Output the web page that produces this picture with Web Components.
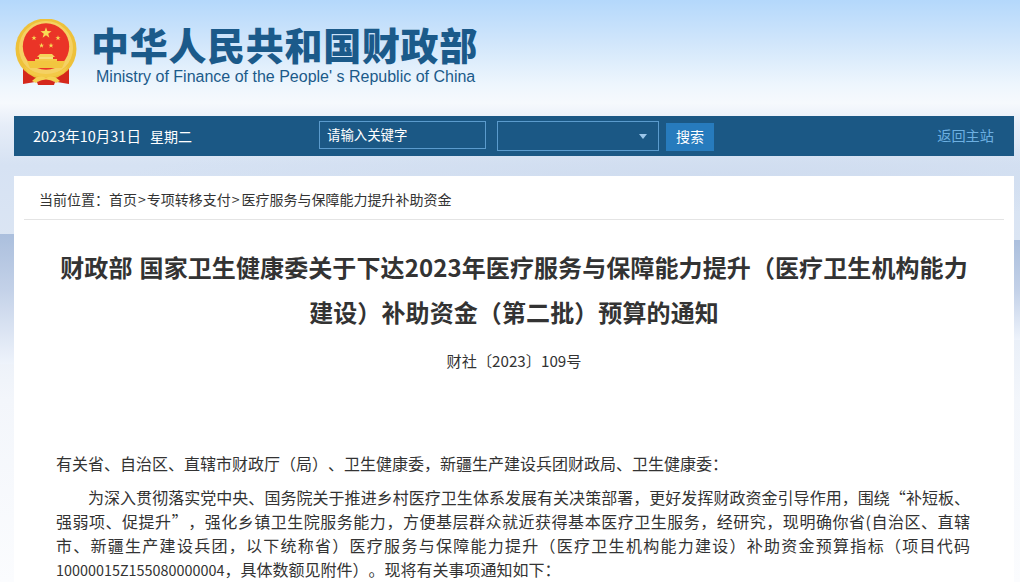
<!DOCTYPE html>
<html lang="zh-CN">
<head>
<meta charset="UTF-8">
<title>财政部</title>
<style>
html, body { margin: 0; height: 582px; overflow: hidden; }
body {
    font-family: "Liberation Sans", "Noto Sans CJK SC", sans-serif;
    background:
        linear-gradient(180deg, #abbfdd 0, #c3d1e8 55px, #eef3fb 130px) 0 234px / 14px 130px no-repeat,
        linear-gradient(180deg, #abbfdd 0, #c3d1e8 50px, #eef3fb 100px) 1014px 240px / 6px 100px no-repeat,
        radial-gradient(ellipse 600px 40px at 720px 178px, #cfdcef 0%, rgba(207,220,239,0) 100%),
        linear-gradient(180deg, #b4d8fb 0%, #cfe5fb 40px, #eef6fd 85px, #f6f9fd 103px, #e6edf8 125px, #d6e2f3 165px, #dbe5f3 240px, #f3f6fb 400px, #fbfcfe 582px);
}
</style>
</head>
<body>
<mof-header></mof-header>
<mof-toolbar date="2023年10月31日" weekday="星期二"></mof-toolbar>
<mof-article>
    <mof-crumbs slot="crumbs"></mof-crumbs>
    <h1 slot="title">财政部 国家卫生健康委关于下达2023年医疗服务与保障能力提升（医疗卫生机构能力建设）补助资金（第二批）预算的通知</h1>
    <div slot="docno">财社〔2023〕109号</div>
    <p>有关省、自治区、直辖市财政厅（局）、卫生健康委，新疆生产建设兵团财政局、卫生健康委：</p>
    <p class="indent">为深入贯彻落实党中央、国务院关于推进乡村医疗卫生体系发展有关决策部署，更好发挥财政资金引导作用，围绕“补短板、强弱项、促提升”，强化乡镇卫生院服务能力，方便基层群众就近获得基本医疗卫生服务，经研究，现明确你省(自治区、直辖市、新疆生产建设兵团，以下统称省）医疗服务与保障能力提升（医疗卫生机构能力建设）补助资金预算指标（项目代码<span style="font-size:14.4px">10000015Z155080000004</span>，具体数额见附件）。现将有关事项通知如下：</p>
</mof-article>

<script>
    // Site header: emblem plus ministry name
    class MofHeader extends HTMLElement {
        constructor() {
            super();
            this.attachShadow({ mode: 'open' });
            const star = (cx, cy, r) => {
                let pts = [];
                for (let i = 0; i < 10; i++) {
                    const a = -Math.PI / 2 + i * Math.PI / 5;
                    const rr = i % 2 ? r * 0.4 : r;
                    pts.push((cx + rr * Math.cos(a)).toFixed(2) + ',' + (cy + rr * Math.sin(a)).toFixed(2));
                }
                return `<polygon points="${pts.join(' ')}" fill="#f8dc55"/>`;
            };
            this.shadowRoot.innerHTML = `
                <style>
                    :host { display: flex; height: 116px; box-sizing: border-box; padding: 19px 0 0 15px; }
                    svg { width: 62px; height: 66px; flex: none; }
                    .names { margin-left: 14px; padding-top: 5px; color: #1b5a8a; }
                    .cn { font: 900 38px/40px "Noto Sans CJK SC", sans-serif; letter-spacing: 0.7px; white-space: nowrap; }
                    .en { font: 16px/20px "Liberation Sans", sans-serif; margin: 3px 0 0 5px; white-space: nowrap; }
                </style>
                <svg viewBox="0 0 62 66">
                    <!-- red ribbons behind the ring -->
                    <path d="M8 46 L8 65 L20 63 L22 58 L40 58 L42 63 L54 65 L54 46 Z" fill="#d5281c"/>
                    <circle cx="31" cy="30" r="30.5" fill="#eec13a"/>
                    <circle cx="31" cy="29" r="27" fill="#f5d163"/>
                    <circle cx="31" cy="27.5" r="23.2" fill="#ea3427"/>
                    ${star(31, 14, 5.8)}
                    ${star(19, 19, 2.7)}
                    ${star(43, 19, 2.7)}
                    ${star(26.5, 26.5, 2.7)}
                    ${star(36, 26.5, 2.7)}
                    <!-- Tiananmen -->
                    <path d="M25 35 L37 35 L40 38 L22 38 Z" fill="#f6d25a"/>
                    <rect x="24" y="38" width="14" height="2" fill="#f7de7c"/>
                    <rect x="20" y="40" width="22" height="2" fill="#f3c948"/>
                    <path d="M12 42 H50 L47 49 H15 Z" fill="#f2c63f"/>
                    <!-- gold wreath at the foot -->
                    <path d="M9 47 Q31 63 53 47 L49 54 Q31 62 13 54 Z" fill="#f3c947"/>
                    <path d="M17 62 Q24 55 31 59 Q38 55 45 62 L41 64 Q36 60 31 63 Q26 60 21 64 Z" fill="#f5d255"/>
                    <path d="M22 63 Q31 58 40 63 L39 66 H23 Z" fill="#d5281c"/>
                </svg>
                <div class="names">
                    <div class="cn">中华人民共和国财政部</div>
                    <div class="en">Ministry of Finance of the People' s Republic of China</div>
                </div>
            `;
        }
    }
    customElements.define('mof-header', MofHeader);

    // Blue bar with date, search controls and back link
    class MofToolbar extends HTMLElement {
        constructor() {
            super();
            this.attachShadow({ mode: 'open' });
            this.shadowRoot.innerHTML = `
                <style>
                    :host {
                        display: flex; align-items: center; height: 40px; margin: 0 6px 0 14px;
                        background: #1b5885; color: #fff; font: 13.5px "Noto Sans CJK SC", sans-serif;
                    }
                    .date { width: 305px; padding: 0 0 2px 19px; box-sizing: border-box; white-space: nowrap; font-size: 14.5px; }
                    .date b { font-weight: 400; font-size: 14px; margin-left: 9px; }
                    .box { box-sizing: border-box; border: 1px solid #5b9bcd; display: flex; align-items: center; }
                    .kw { width: 167px; height: 28px; margin-bottom: 2px; padding: 0 0 2px 7px; font-size: 13.4px; }
                    .sel { width: 162px; height: 30px; margin-left: 11px; justify-content: flex-end; padding-right: 11px; }
                    .caret { width: 0; height: 0; border: 4px solid transparent; border-top: 5px solid #9cc6ea; margin-top: 4px; }
                    button {
                        width: 48px; height: 28px; margin: 2px 0 0 7px; border: 0; padding: 0 0 2px;
                        background: #277bbd; color: #fff; font: 14px "Noto Sans CJK SC", sans-serif;
                    }
                    a { margin: 0 20px 2px auto; color: #6db0e2; font-size: 14.2px; text-decoration: none; }
                </style>
                <span class="date">${this.getAttribute('date')}<b>${this.getAttribute('weekday')}</b></span>
                <div class="box kw">请输入关键字</div>
                <div class="box sel"><span class="caret"></span></div>
                <button>搜索</button>
                <a href="#">返回主站</a>
            `;
        }
    }
    customElements.define('mof-toolbar', MofToolbar);

    class MofCrumbs extends HTMLElement {
        constructor() {
            super();
            this.attachShadow({ mode: 'open' });
            this.shadowRoot.innerHTML = `
                <style>
                    :host {
                        display: block; margin: 0 10px; height: 44px; box-sizing: border-box; padding: 13px 0 0 15px;
                        border-bottom: 1px solid #e4e4e4; color: #333; font: 14px/20px "Noto Sans CJK SC", sans-serif;
                        white-space: nowrap; text-spacing-trim: space-all;
                    }
                    i { font-style: normal; padding: 0 1px; }
                    i + span { margin-left: 1px; }
                </style>
                当前位置：首页<i>&gt;</i>专项转移支付<i>&gt;</i><span>医疗服务与保障能力提升补助资金</span>
            `;
        }
    }
    customElements.define('mof-crumbs', MofCrumbs);

    // White article panel, body text goes in the default slot
    class MofArticle extends HTMLElement {
        constructor() {
            super();
            this.attachShadow({ mode: 'open' });
            this.shadowRoot.innerHTML = `
                <style>
                    :host { display: block; margin: 20px 6px 0 14px; height: 420px; background: #fff; overflow: hidden; }
                    .title { padding: 24px 42px 0; text-align: center; }
                    ::slotted(h1) { margin: 0; font: bold 24px/45px "Noto Sans CJK SC", sans-serif; color: #333; letter-spacing: 0.1px; word-spacing: 1.5px; }
                    ::slotted([slot=docno]) { text-align: center; font: 15.2px/24px "Noto Sans CJK SC", sans-serif; color: #333; margin-top: 14px; }
                    .body { padding: 79px 44px 0 42px; font: 16px/24px "Noto Sans CJK SC", sans-serif; color: #333; text-spacing-trim: space-all; }
                    ::slotted(p) { margin: 0 0 10px; text-align: justify; }
                    ::slotted(p.indent) { text-indent: 2em; }
                </style>
                <slot name="crumbs"></slot>
                <div class="title">
                    <slot name="title"></slot>
                    <slot name="docno"></slot>
                </div>
                <div class="body"><slot></slot></div>
            `;
        }
    }
    customElements.define('mof-article', MofArticle);
</script>
</body>
</html>
